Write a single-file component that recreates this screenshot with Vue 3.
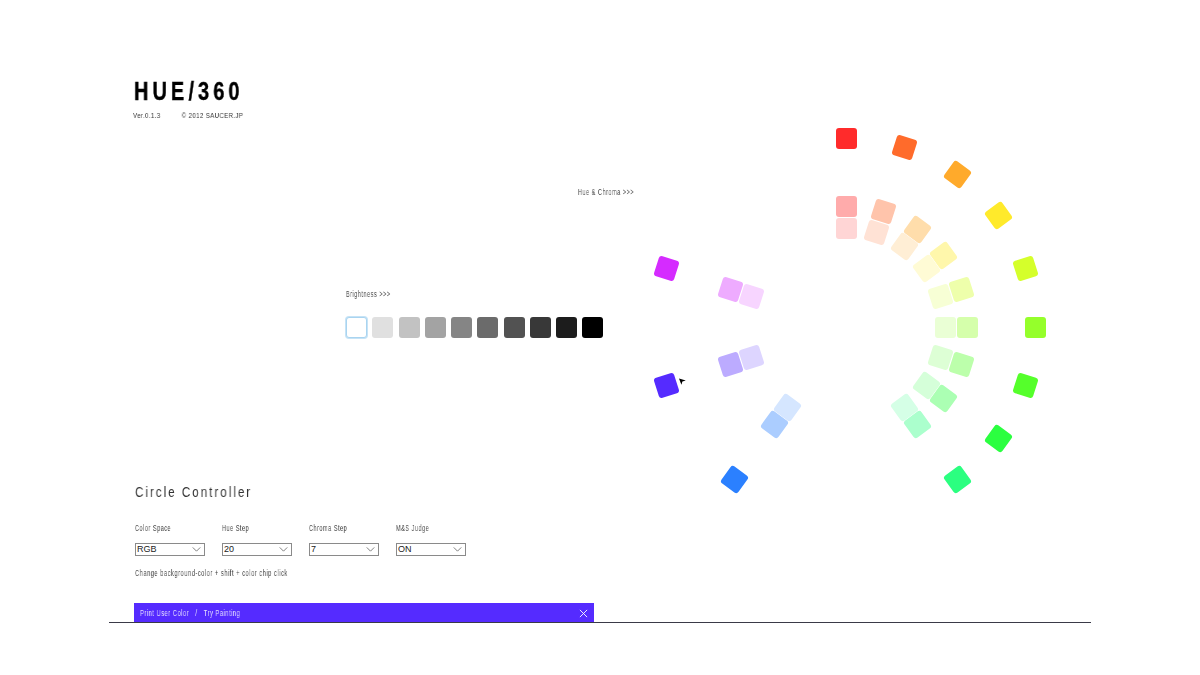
<template>
  <div class="page">
    <main class="stage">
      <section class="left">
        <header class="head">
          <h1 class="logo squeezed">HUE/360</h1>
          <p class="ver squeezed"><span>Ver.0.1.3</span><span>© 2012 SAUCER.JP</span></p>
        </header>

        <p class="hue-label squeezed">Hue &amp; Chroma &gt;&gt;&gt;</p>

        <div class="brightness">
          <p class="small squeezed">Brightness &gt;&gt;&gt;</p>
          <div class="grays">
            <i v-for="(g, i) in grays" :key="g" class="gray" :class="{ first: i === 0 }" :style="{ background: g }"></i>
          </div>
        </div>

        <div class="controller">
          <h2 class="ctl-title squeezed">Circle Controller</h2>
          <div class="fields">
            <label v-for="f in fields" :key="f.label" class="field">
              <span class="small squeezed">{{ f.label }}</span>
              <span class="select-wrap">
                <select class="select">
                  <option>{{ f.value }}</option>
                </select>
                <svg class="chev" viewBox="0 0 10 6" fill="none" stroke="#666" stroke-width="1"><path d="M.5.5 5 5 9.5.5"/></svg>
              </span>
            </label>
          </div>
          <p class="small note squeezed">Change background-color + shift + color chip click</p>
        </div>

        <div class="bar">
          <span class="bar-text squeezed">Print User Color<em>/</em>Try Painting</span>
          <svg class="close" viewBox="0 0 10 10" fill="none" stroke="#fff" stroke-width="1"><path d="M1 1l8 8M9 1l-8 8"/></svg>
        </div>
      </section>

      <section class="wheel-area">
        <!-- chips sit on the circle, center is 846,327 on the page -->
        <div class="wheel">
          <i
            v-for="c in chips"
            :key="c.key"
            class="chip"
            :style="{ left: c.x + 'px', top: c.y + 'px', background: c.color, transform: `rotate(${c.angle}deg)` }"
          ></i>
          <svg class="pointer" viewBox="0 0 7 7"><path d="M0 .6 6.8 2.4 3.4 3.5 2.4 6.8Z"/></svg>
        </div>
      </section>
    </main>
  </div>
</template>

<script setup>
const grays = ['#ffffff', '#e0e0e0', '#c2c2c2', '#a3a3a3', '#858585', '#6b6b6b', '#525252', '#383838', '#1c1c1c', '#000000']

const fields = [
  { label: 'Color Space', value: 'RGB' },
  { label: 'Hue Step', value: '20' },
  { label: 'Chroma Step', value: '7' },
  { label: 'M&S Judge', value: 'ON' },
]

function hsv(h, s) {
  const low = Math.round(255 * (1 - s))
  const ch = n => {
    const k = (n + h / 60) % 6
    const t = Math.max(0, Math.min(k, 4 - k, 1))
    return Math.round(255 - (255 - low) * t)
  }
  return `rgb(${ch(5)},${ch(3)},${ch(1)})`
}

const hues = [0, 18, 36, 54, 72, 90, 108, 126, 144, 216, 252, 288]

// radius -> saturation, per ring
const rings = [
  { r: 189, s: 0.83 },
  { r: 121, s: 0.33 },
  { r: 99, s: 0.165 },
]

const chips = rings.flatMap(ring =>
  hues.map(h => {
    const a = (h * Math.PI) / 180
    return {
      key: `${ring.r}-${h}`,
      x: ring.r * Math.sin(a),
      y: -ring.r * Math.cos(a),
      angle: h,
      color: hsv(h, ring.s),
    }
  })
)
</script>

<style>
html, body {
  margin: 0;
  background: #fff;
}
</style>

<style scoped>
.page {
  width: 1200px;
  height: 675px;
  overflow: hidden;
  padding: 0 109px;
  box-sizing: border-box;
  font-family: "Liberation Sans", sans-serif;
  color: #333;
}

.stage {
  display: flex;
  height: 623px;
  border-bottom: 1px solid #3a3a48;
  box-sizing: border-box;
  padding-left: 25px;
}

.left {
  width: 500px;
  flex-shrink: 0;
  display: flex;
  flex-direction: column;
  padding-top: 78px;
  box-sizing: border-box;
}

/* no condensed family here, so the text faces get squeezed.
   own layer keeps the antialiasing gray */
.squeezed {
  transform-origin: left center;
  white-space: nowrap;
  will-change: transform;
}

.logo {
  margin: 0;
  font-size: 25px;
  line-height: 27px;
  font-weight: 700;
  letter-spacing: 5.2px;
  color: #000;
  -webkit-text-stroke: 0.4px #000;
  transform: scaleX(0.795);
}

.ver {
  margin: 6px 0 0 -1px;
  font-size: 8px;
  line-height: 10px;
  letter-spacing: 0.5px;
  display: flex;
  gap: 28px;
  transform: scaleX(0.76);
}

.small {
  display: block;
  margin: 0;
  font-size: 8.5px;
  line-height: 10px;
  letter-spacing: 0.8px;
  color: #444;
  transform: scaleX(0.65);
}

.hue-label {
  margin: 66px 0 0;
  font-size: 8.5px;
  line-height: 10px;
  letter-spacing: 0.8px;
  color: #444;
  text-align: right;
  transform: scaleX(0.65);
  transform-origin: right center;
}

.brightness {
  margin: 92px 0 0 212px;
}

.grays {
  display: flex;
  gap: 5.25px;
  margin-top: 18px;
}

.gray {
  width: 21px;
  height: 21px;
  border-radius: 3px;
  flex-shrink: 0;
  box-sizing: border-box;
}

.gray.first {
  border: 1px solid #a9d4f0;
  box-shadow: 0 0 0 1px #c6e3f6;
}

.controller {
  margin-top: auto;
  padding-left: 1px;
}

.ctl-title {
  margin: 0;
  font-size: 14px;
  line-height: 16px;
  font-weight: 400;
  letter-spacing: 2.4px;
  color: #333;
  transform: scaleX(0.83);
}

.fields {
  display: flex;
  gap: 17px;
  margin-top: 23px;
}

.field {
  width: 70px;
  display: flex;
  flex-direction: column;
  gap: 10px;
}

.select-wrap {
  position: relative;
  display: block;
  height: 13px;
}

.select {
  appearance: none;
  display: block;
  width: 100%;
  height: 13px;
  margin: 0;
  padding: 0 0 0 1px;
  border: 1px solid #8a8a8a;
  border-radius: 0;
  background: #fff;
  font-family: "Liberation Sans", sans-serif;
  font-size: 9px;
  line-height: 11px;
  color: #222;
  box-sizing: border-box;
}

.chev {
  position: absolute;
  right: 4px;
  top: 4px;
  width: 9px;
  height: 5px;
  pointer-events: none;
}

.note {
  margin-top: 12px;
  transform: scaleX(0.67);
}

.bar {
  width: 460px;
  height: 19px;
  margin-top: 25px;
  background: #552bff;
  color: #e6e0ff;
  display: flex;
  align-items: center;
  justify-content: space-between;
  padding: 1px 6px 0 6px;
  box-sizing: border-box;
  font-size: 8.5px;
  letter-spacing: 0.6px;
}

.bar-text {
  display: block;
  transform: scaleX(0.7);
}

.bar-text em {
  font-style: normal;
  margin: 0 9px;
}

.close {
  width: 9px;
  height: 9px;
}

.wheel-area {
  flex: 1;
  position: relative;
}

/* anchor at the circle center */
.wheel {
  position: absolute;
  left: 212px;
  top: 327px;
  width: 0;
  height: 0;
}

.chip {
  position: absolute;
  width: 21px;
  height: 21px;
  margin: -10.5px 0 0 -10.5px;
  border-radius: 3px;
}

.pointer {
  position: absolute;
  left: -167px;
  top: 51px;
  width: 7px;
  height: 7px;
  fill: #000;
}
</style>
